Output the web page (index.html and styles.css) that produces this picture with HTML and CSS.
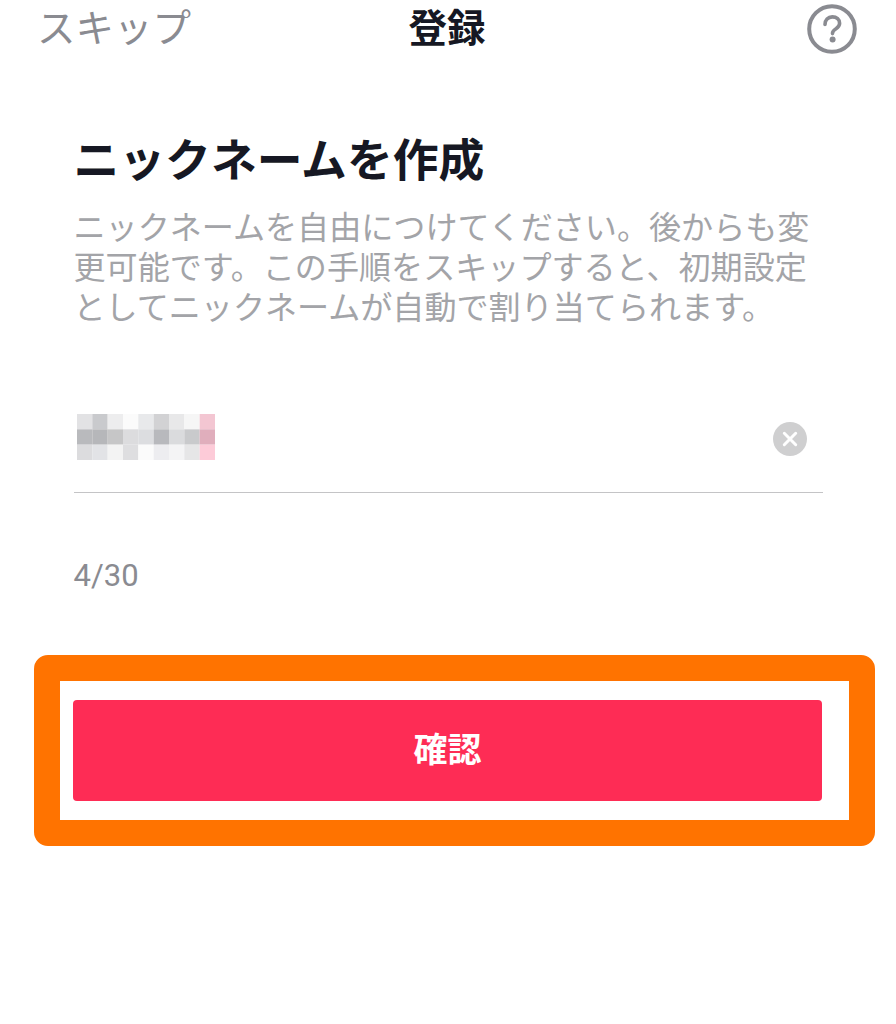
FILE: index.html
```html
<!DOCTYPE html>
<html lang="ja">
<head>
<meta charset="utf-8">
<title>登録</title>
<link rel="stylesheet" href="styles.css">
</head>
<body>
<header class="topbar">
  <span class="skip">スキップ</span>
  <span class="heading">登録</span>
  <svg class="help" viewBox="0 0 50 50" aria-hidden="true">
    <circle cx="25" cy="25" r="22.8" fill="none" stroke="#8a8b91" stroke-width="4"/>
    <path d="M18 20.5c0-4.6 3-7.6 7.3-7.6 4.4 0 7.3 2.7 7.3 6.4 0 2.9-1.7 4.3-3.6 5.5-2 1.3-3.5 2.3-3.5 4.4v.4" fill="none" stroke="#8a8b91" stroke-width="3.6" stroke-linecap="round"/>
    <circle cx="25.6" cy="35.4" r="3" fill="#8a8b91"/>
  </svg>
</header>
<main class="content">
  <h1 class="title">ニックネームを作成</h1>
  <p class="desc">ニックネームを自由につけてください。後からも変<br>更可能です。この手順をスキップすると、初期設定<br>としてニックネームが自動で割り当てられます。</p>
  <div class="field">
    <svg class="mosaic" viewBox="0 0 9 3" preserveAspectRatio="none" aria-hidden="true">
      <rect x="0" y="0" width="1" height="1" fill="#e2e2e4"/><rect x="1" y="0" width="1" height="1" fill="#c9cacd"/><rect x="2" y="0" width="1" height="1" fill="#ededee"/><rect x="3" y="0" width="1" height="1" fill="#fbfbfb"/><rect x="4" y="0" width="1" height="1" fill="#e8e9eb"/><rect x="5" y="0" width="1" height="1" fill="#d2d2d4"/><rect x="6" y="0" width="1" height="1" fill="#e8e8e9"/><rect x="7" y="0" width="1" height="1" fill="#f6f6f6"/><rect x="8" y="0" width="1" height="1" fill="#f3c6d2"/>
      <rect x="0" y="1" width="1" height="1" fill="#b9babd"/><rect x="1" y="1" width="1" height="1" fill="#b6b7ba"/><rect x="2" y="1" width="1" height="1" fill="#c6c6c7"/><rect x="3" y="1" width="1" height="1" fill="#dcdcde"/><rect x="4" y="1" width="1" height="1" fill="#dcdde0"/><rect x="5" y="1" width="1" height="1" fill="#b8b9bd"/><rect x="6" y="1" width="1" height="1" fill="#dadbdd"/><rect x="7" y="1" width="1" height="1" fill="#c9cacc"/><rect x="8" y="1" width="1" height="1" fill="#e0aebc"/>
      <rect x="0" y="2" width="1" height="1" fill="#dcdcde"/><rect x="1" y="2" width="1" height="1" fill="#e2e3e6"/><rect x="2" y="2" width="1" height="1" fill="#f3f3f3"/><rect x="3" y="2" width="1" height="1" fill="#dedee0"/><rect x="4" y="2" width="1" height="1" fill="#fbfbfb"/><rect x="5" y="2" width="1" height="1" fill="#ededf0"/><rect x="6" y="2" width="1" height="1" fill="#f4f4f5"/><rect x="7" y="2" width="1" height="1" fill="#e6e6e7"/><rect x="8" y="2" width="1" height="1" fill="#fdcbd8"/>
    </svg>
    <svg class="clear" viewBox="0 0 34 34" aria-hidden="true">
      <circle cx="17" cy="17" r="17" fill="#cfcfd0"/>
      <path d="M11.3 11.3l11.4 11.4M22.7 11.3L11.3 22.7" stroke="#fff" stroke-width="3" stroke-linecap="round"/>
    </svg>
  </div>
  <div class="counter">4/30</div>
</main>
<section class="highlight">
  <button class="confirm" type="button">確認</button>
</section>
</body>
</html>
```
FILE: styles.css
```css
* { box-sizing: border-box; }
html, body { margin: 0; padding: 0; }
body {
  width: 896px;
  height: 1024px;
  overflow: hidden;
  background: #fff;
  font-family: "Noto Sans CJK JP", "Noto Sans", sans-serif;
}
.topbar {
  display: grid;
  grid-template-columns: 1fr auto 1fr;
  align-items: start;
  height: 56px;
  padding: 0 39px 0 37px;
}
.skip {
  font-size: 38.5px;
  line-height: 50px;
  color: #8a8b91;
  white-space: nowrap;
}
.heading {
  font-size: 38.5px;
  font-weight: 700;
  line-height: 50px;
  color: #161823;
}
.help {
  justify-self: end;
  width: 50px;
  height: 50px;
  margin-top: 4px;
}
.content {
  padding: 0 73.5px;
}
.title {
  margin: 69px 0 0;
  font-size: 45.8px;
  font-weight: 700;
  line-height: 64px;
  color: #161823;
  white-space: nowrap;
}
.desc {
  margin: 16px 0 0;
  font-size: 32.1px;
  line-height: 40px;
  color: #a3a4a8;
  white-space: nowrap;
}
.field {
  display: flex;
  align-items: center;
  justify-content: space-between;
  height: 168px;
  padding: 90px 16px 28.5px 3px;
  border-bottom: 1.5px solid #c4c4c6;
}
.mosaic {
  width: 138px;
  height: 46px;
  margin-bottom: 5px;
  filter: blur(0.6px);
}
.clear {
  width: 34px;
  height: 34px;
}
.counter {
  margin-top: 63px;
  font-family: Roboto, "Liberation Sans", sans-serif;
  font-size: 31px;
  line-height: 40px;
  color: #8a8b91;
}
.highlight {
  width: 841px;
  height: 191px;
  margin: 59px 0 0 34px;
  padding: 19px 27px 19px 13px;
  border: 26px solid #ff7300;
  border-radius: 14px;
  background: #fff;
}
.confirm {
  display: block;
  width: 749px;
  height: 101px;
  margin: 0;
  padding: 0 0 7px;
  border: 0;
  border-radius: 4px;
  background: #fe2c55;
  color: #fff;
  font-family: inherit;
  font-size: 34px;
  font-weight: 700;
}
```
